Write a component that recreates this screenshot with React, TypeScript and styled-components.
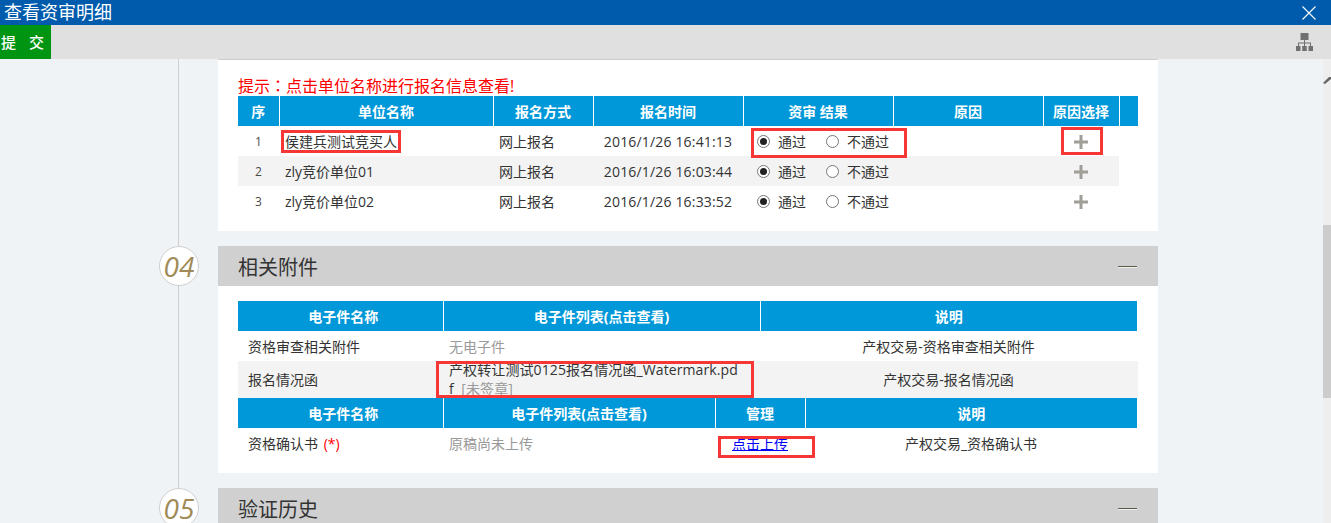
import React from "react";
import styled, { createGlobalStyle } from "styled-components";

const FONT = `"Open Sans", "Noto Sans CJK SC", sans-serif`;

const GlobalStyle = createGlobalStyle`
    html, body {
        margin: 0;
        padding: 0;
        height: 100%;
        overflow: hidden;
        background: #eff3f6;
    }
    body {
        font-family: ${FONT};
        font-size: 14px;
        color: #333;
    }
`;

const Page = styled.div`
    position: relative;
    width: 1331px;
    height: 523px;
    overflow: hidden;
    display: flex;
    flex-direction: column;
`;

const TitleBar = styled.header`
    height: 25px;
    flex: none;
    background: #005bac;
    color: #fff;
    display: flex;
    align-items: center;
    justify-content: space-between;
    padding: 0 15px 0 4px;
    font-size: 18px;
    line-height: 25px;
`;

const Toolbar = styled.div`
    height: 34px;
    flex: none;
    background: #e0e0e0;
    display: flex;
    align-items: stretch;
    justify-content: space-between;
    padding-right: 18px;
`;

const SubmitButton = styled.button`
    width: 51px;
    border: 0;
    padding: 0 0 2px;
    background: #009413;
    color: #fff;
    font-family: ${FONT};
    font-size: 15px;
    font-weight: 500;
    letter-spacing: 13px;
    text-indent: 1px;
    text-align: left;
    white-space: nowrap;
`;

const ToolIcon = styled.svg`
    width: 17px;
    height: 18px;
    align-self: center;
    margin-top: -1px;
`;

const Workspace = styled.div`
    flex: 1;
    min-height: 0;
    display: flex;
`;

const Timeline = styled.main`
    position: relative;
    flex: 1;
    padding-left: 218px;
    overflow: hidden;
    &::before {
        content: "";
        position: absolute;
        left: 178px;
        top: 0;
        bottom: 0;
        width: 1px;
        background: #cfcfcf;
    }
`;

const Panel = styled.section<{ $height: number; $first?: boolean; $top?: number }>`
    width: 940px;
    height: ${(p) => p.$height}px;
    box-sizing: border-box;
    background: #fff;
    padding: ${(p) => p.$top ?? 0}px 20px 0;
    margin-bottom: 15px;
    ${(p) => p.$first && "border-top: 1px solid #ccc;"}
`;

const SectionHeader = styled.div`
    position: relative;
    width: 940px;
    height: 40px;
    box-sizing: border-box;
    background: #d0d0d0;
    padding: 0 21px 0 20px;
    display: flex;
    align-items: center;
    justify-content: space-between;
`;

const SectionTitle = styled.h2`
    margin: 0;
    padding-top: 4px;
    font-size: 20px;
    font-weight: 400;
    line-height: 40px;
    color: #333;
`;

const CollapseDash = styled.span`
    width: 19px;
    height: 1px;
    background: #5c5a48;
    box-shadow: 0 1px 0 #f2f2f0;
`;

const StepBadge = styled.span`
    position: absolute;
    left: -59px;
    top: 0;
    width: 40px;
    height: 40px;
    box-sizing: border-box;
    border-radius: 50%;
    border: 1px solid #cfcfcf;
    background: #fff;
    color: #a08a58;
    font-family: "Open Sans", sans-serif;
    font-style: italic;
    font-size: 28px;
    line-height: 38px;
    text-align: center;
`;

const Notice = styled.p`
    margin: 0;
    padding-top: 15px;
    height: 21px;
    color: #f00;
    font-size: 16px;
    line-height: 21px;
`;

const NoticeColon = styled.span`
    font-family: "Noto Sans CJK TC", sans-serif;
`;

const Table = styled.table<{ $width?: number }>`
    width: ${(p) => p.$width ?? 900}px;
    table-layout: fixed;
    border-collapse: collapse;
    font-size: 14px;
`;

const HeadCell = styled.th<{ $shift?: number }>`
    height: 30px;
    padding: 0 0 0 ${(p) => p.$shift ?? 0}px;
    background: #0098d8;
    color: #fff;
    font-size: 14px;
    font-weight: 700;
    text-align: center;
    border-left: 1px solid #fff;
    &:first-child {
        border-left: 0;
    }
`;

const Row = styled.tr<{ $striped?: boolean; $height?: number }>`
    height: ${(p) => p.$height ?? 30}px;
    background: ${(p) => (p.$striped ? "#f3f3f3" : "#fff")};
`;

const Cell = styled.td<{ $align?: string; $pad?: number }>`
    padding: 1px ${(p) => p.$pad ?? 5}px 0;
    text-align: ${(p) => p.$align ?? "left"};
    line-height: 18px;
    color: #333;
`;

const StripeEndCell = styled(Cell)`
    box-shadow: 1px 0 0 #f3f3f3;
`;

const BlankCell = styled.td`
    padding: 0;
    background: #fff;
`;

const SeqCell = styled(Cell)`
    text-align: center;
    font-size: 12px;
    color: #4a4a4a;
`;

const TimeCell = styled(Cell)`
    text-align: center;
    letter-spacing: 0.17px;
`;

const RadioGroup = styled.div`
    display: flex;
    align-items: center;
    padding-left: 14px;
    white-space: nowrap;
`;

const RadioLabel = styled.label`
    display: flex;
    align-items: center;
    gap: 8px;
    margin-right: 20px;
    line-height: 18px;
`;

const Radio = styled.input.attrs({ type: "radio" })`
    appearance: none;
    flex: none;
    width: 13px;
    height: 13px;
    margin: 0;
    box-sizing: border-box;
    border: 1px solid #777;
    border-radius: 50%;
    background: #fff;
    display: grid;
    place-items: center;
    &:checked::before {
        content: "";
        width: 7px;
        height: 7px;
        border-radius: 50%;
        background: #222;
    }
`;

const PlusIcon = styled.svg`
    display: block;
    width: 14px;
    height: 14px;
    margin: 0 auto;
`;

const Muted = styled.span`
    color: #999;
`;

const Required = styled.span`
    color: #f00;
    margin-left: 2px;
`;

const FileName = styled.div`
    width: 291px;
    word-break: break-all;
    letter-spacing: 0.1px;
    line-height: 19px;
    margin: -3px 0 0 1px;
`;

const UploadLink = styled.a`
    display: block;
    margin-left: 17px;
    color: #00f;
    text-decoration: underline;
    cursor: pointer;
`;

const Scrollbar = styled.div`
    position: relative;
    width: 8px;
    flex: none;
    margin-left: auto;
    background: #eeeeee;
`;

const ScrollThumb = styled.div`
    position: absolute;
    left: 0;
    right: 0;
    top: 166px;
    height: 173px;
    background: #cccccc;
`;

const ScrollArrow = styled.svg`
    position: absolute;
    left: 0;
    top: 16px;
    width: 8px;
    height: 10px;
`;

/* red review marks drawn on top of the screenshot */
const Mark = styled.div<{ $x: number; $y: number; $w: number; $h: number }>`
    position: absolute;
    left: ${(p) => p.$x}px;
    top: ${(p) => p.$y}px;
    width: ${(p) => p.$w}px;
    height: ${(p) => p.$h}px;
    box-sizing: border-box;
    border: 3px solid #f73636;
    pointer-events: none;
`;

const bidders = [
    { seq: "1", name: "侯建兵测试竞买人", time: "2016/1/26 16:41:13" },
    { seq: "2", name: "zly竞价单位01", time: "2016/1/26 16:03:44" },
    { seq: "3", name: "zly竞价单位02", time: "2016/1/26 16:33:52" },
];

const marks = [
    { x: 281, y: 130, w: 120, h: 23 },
    { x: 751, y: 128, w: 156, h: 30 },
    { x: 1061, y: 127, w: 42, h: 28 },
    { x: 436, y: 361, w: 318, h: 37 },
    { x: 718, y: 436, w: 97, h: 22 },
];

const Columns = ({ widths }: { widths: number[] }) => (
    <colgroup>
        {widths.map((w, i) => (
            <col key={i} width={w} />
        ))}
    </colgroup>
);

const App = () => {
    return (
        <Page>
            <GlobalStyle />
            <TitleBar>
                查看资审明细
                <svg width="14" height="14" viewBox="0 0 14 14" aria-label="关闭">
                    <path d="M0.5 0.5 L13.5 13.5 M13.5 0.5 L0.5 13.5" stroke="#fff" strokeWidth="1.1" />
                </svg>
            </TitleBar>
            <Toolbar>
                <SubmitButton>提交</SubmitButton>
                <ToolIcon viewBox="0 0 17 18">
                    <g fill="#707070">
                        <rect x="4.5" y="0" width="8" height="7" />
                        <rect x="0" y="13" width="4.5" height="5" />
                        <rect x="6.2" y="13" width="4.5" height="5" />
                        <rect x="12.5" y="13" width="4.5" height="5" />
                        <path d="M8 7h1v2.5h6v3.5h-1v-2.5H9V13H8v-2.5H3V13H2V9.500h6z" />
                    </g>
                </ToolIcon>
            </Toolbar>
            <Workspace>
                <Timeline>
                    <Panel $first $height={172}>
                        <Notice>
                            提示<NoticeColon>：</NoticeColon>点击单位名称进行报名信息查看!
                        </Notice>
                        <Table>
                            <Columns widths={[41, 214, 100, 150, 150, 150, 76, 19]} />
                            <thead>
                                <tr>
                                    <HeadCell>序</HeadCell>
                                    <HeadCell>单位名称</HeadCell>
                                    <HeadCell>报名方式</HeadCell>
                                    <HeadCell>报名时间</HeadCell>
                                    <HeadCell>资审 结果</HeadCell>
                                    <HeadCell>原因</HeadCell>
                                    <HeadCell>原因选择</HeadCell>
                                    <HeadCell />
                                </tr>
                            </thead>
                            <tbody>
                                {bidders.map((b, i) => (
                                    <Row key={b.seq} $striped={i === 1}>
                                        <SeqCell>{b.seq}</SeqCell>
                                        <Cell $pad={6}>{b.name}</Cell>
                                        <Cell $pad={6}>网上报名</Cell>
                                        <TimeCell>{b.time}</TimeCell>
                                        <Cell $pad={0}>
                                            <RadioGroup>
                                                <RadioLabel>
                                                    <Radio name={`r${b.seq}`} defaultChecked />
                                                    通过
                                                </RadioLabel>
                                                <RadioLabel>
                                                    <Radio name={`r${b.seq}`} />
                                                    不通过
                                                </RadioLabel>
                                            </RadioGroup>
                                        </Cell>
                                        <Cell />
                                        <Cell $pad={0}>
                                            <PlusIcon viewBox="0 0 14 14">
                                                <path d="M5.500 0h3v5.500H14v3H8.500V14h-3V8.500H0v-3h5.500z" fill="#a09e96" />
                                            </PlusIcon>
                                        </Cell>
                                        <BlankCell />
                                    </Row>
                                ))}
                            </tbody>
                        </Table>
                    </Panel>

                    <SectionHeader>
                        <StepBadge>04</StepBadge>
                        <SectionTitle>相关附件</SectionTitle>
                        <CollapseDash />
                    </SectionHeader>
                    <Panel $height={187} $top={15}>
                        <Table $width={899}>
                            <Columns widths={[205, 317, 377]} />
                            <thead>
                                <tr>
                                    <HeadCell $shift={6}>电子件名称</HeadCell>
                                    <HeadCell>电子件列表(点击查看)</HeadCell>
                                    <HeadCell>说明</HeadCell>
                                </tr>
                            </thead>
                            <tbody>
                                <Row>
                                    <Cell $pad={10}>资格审查相关附件</Cell>
                                    <Cell $pad={6}><Muted>无电子件</Muted></Cell>
                                    <Cell $align="center">产权交易-资格审查相关附件</Cell>
                                </Row>
                                <Row $striped $height={37}>
                                    <Cell $pad={10}>报名情况函</Cell>
                                    <Cell>
                                        <FileName>
                                            产权转让测试0125报名情况函_Watermark.pdf <Muted>&nbsp;[未签章]</Muted>
                                        </FileName>
                                    </Cell>
                                    <StripeEndCell $align="center">产权交易-报名情况函</StripeEndCell>
                                </Row>
                            </tbody>
                        </Table>
                        <Table $width={899}>
                            <Columns widths={[205, 272, 90, 332]} />
                            <thead>
                                <tr>
                                    <HeadCell $shift={6}>电子件名称</HeadCell>
                                    <HeadCell>电子件列表(点击查看)</HeadCell>
                                    <HeadCell>管理</HeadCell>
                                    <HeadCell>说明</HeadCell>
                                </tr>
                            </thead>
                            <tbody>
                                <Row>
                                    <Cell $pad={10}>
                                        资格确认书 <Required>(*)</Required>
                                    </Cell>
                                    <Cell $pad={6}><Muted>原稿尚未上传</Muted></Cell>
                                    <Cell $pad={0}>
                                        <UploadLink>点击上传</UploadLink>
                                    </Cell>
                                    <Cell $align="center">产权交易_资格确认书</Cell>
                                </Row>
                            </tbody>
                        </Table>
                    </Panel>

                    <SectionHeader>
                        <StepBadge>05</StepBadge>
                        <SectionTitle>验证历史</SectionTitle>
                        <CollapseDash />
                    </SectionHeader>
                </Timeline>
                <Scrollbar>
                    <ScrollArrow viewBox="0 0 8 10">
                        <path d="M0 8 L6 2 L8 2 L8 4 L2 9 Z" fill="#666" />
                    </ScrollArrow>
                    <ScrollThumb />
                </Scrollbar>
            </Workspace>
            {marks.map((m, i) => (
                <Mark key={i} $x={m.x} $y={m.y} $w={m.w} $h={m.h} />
            ))}
        </Page>
    );
};

export default App;
